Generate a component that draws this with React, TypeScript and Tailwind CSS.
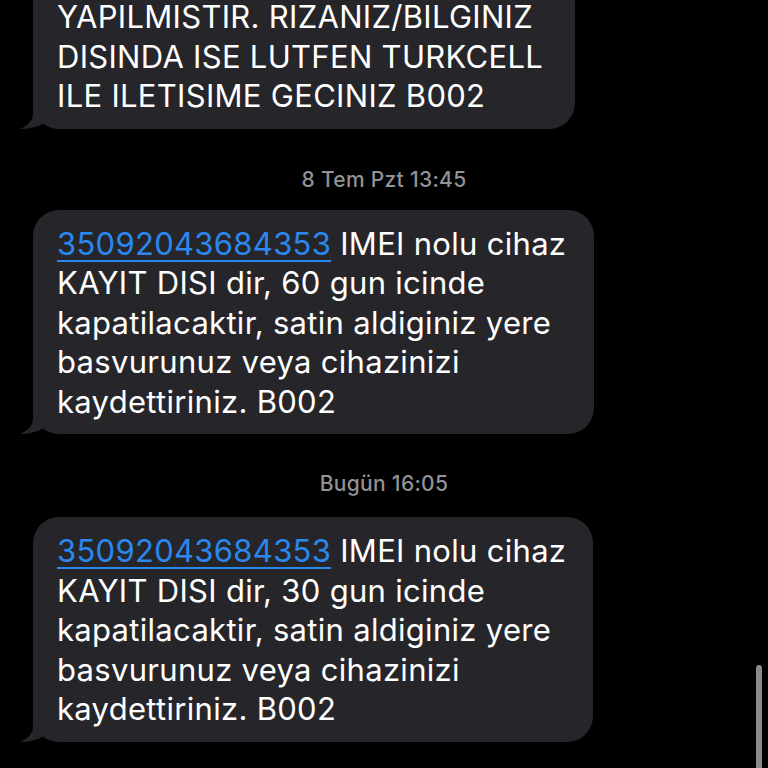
import React from "react";

type Line = { link?: string; text: string };

interface BubbleProps {
  lines: Line[];
  width: string;
  className?: string;
}

function Tail() {
  return (
    <svg
      className="absolute bottom-0 left-[-15px]"
      width="32"
      height="36"
      viewBox="0 0 32 36"
      fill="none"
    >
      <path
        d="M15 0 L15 20 C15 27 11 32 2 36 C11 36 19 34 26 30 L31 0 Z"
        fill="#26262a"
      />
    </svg>
  );
}

function Bubble({ lines, width, className = "" }: BubbleProps) {
  return (
    <div className={`relative ml-[33px] ${width} ${className}`}>
      <div className="relative z-10 rounded-[26px] bg-[#26262a] pl-[24px] pr-[10px] text-[31px] leading-[39.5px] tracking-[0.3px] text-white">
        {lines.map((line, i) => (
          <div key={i} className="whitespace-nowrap">
            {line.link && (
              <>
                <span className="text-[#2a88ee] underline decoration-[1.5px] underline-offset-[5px]">
                  {line.link}
                </span>{" "}
              </>
            )}
            {line.text}
          </div>
        ))}
      </div>
      <div className="absolute bottom-0 left-0 z-10">
        <Tail />
      </div>
    </div>
  );
}

function Timestamp({ children, className = "" }: { children: React.ReactNode; className?: string }) {
  return (
    <div className={`w-full text-center text-[21px] font-medium leading-[24px] tracking-[0.3px] text-[#929297] ${className}`}>
      {children}
    </div>
  );
}

const imeiLines = (days: string): Line[] => [
  { link: "35092043684353", text: "IMEI nolu cihaz" },
  { text: `KAYIT DISI dir, ${days} gun icinde` },
  { text: "kapatilacaktir, satin aldiginiz yere" },
  { text: "basvurunuz veya cihazinizi" },
  { text: "kaydettiriniz. B002" },
];

export default function App() {
  return (
    <div className="relative h-[768px] w-[768px] overflow-hidden bg-black font-['Inter','Liberation_Sans',sans-serif] antialiased">
      <div className="flex flex-col items-start">
        <Bubble
          width="w-[542px]"
          className="mt-[-67px] [&>div:first-child]:pt-[64px] [&>div:first-child]:pb-[13px]"
          lines={[
            { text: "YAPILMISTIR. RIZANIZ/BILGINIZ" },
            { text: "DISINDA ISE LUTFEN TURKCELL" },
            { text: "ILE ILETISIME GECINIZ B002" },
          ]}
        />

        <Timestamp className="mt-[39px] mb-[18px]">8 Tem Pzt 13:45</Timestamp>

        <Bubble
          width="w-[561px]"
          className="[&>div:first-child]:pt-[14px] [&>div:first-child]:pb-[13px]"
          lines={imeiLines("60")}
        />

        <Timestamp className="mt-[38px] mb-[21px]">Bugün 16:05</Timestamp>

        <Bubble
          width="w-[560px]"
          className="[&>div:first-child]:pt-[14px] [&>div:first-child]:pb-[13px]"
          lines={imeiLines("30")}
        />
      </div>

      {/* scroll indicator */}
      <div className="absolute right-[6px] top-[665px] h-[120px] w-[6px] rounded-full bg-[#8a8a8a]" />
    </div>
  );
}
